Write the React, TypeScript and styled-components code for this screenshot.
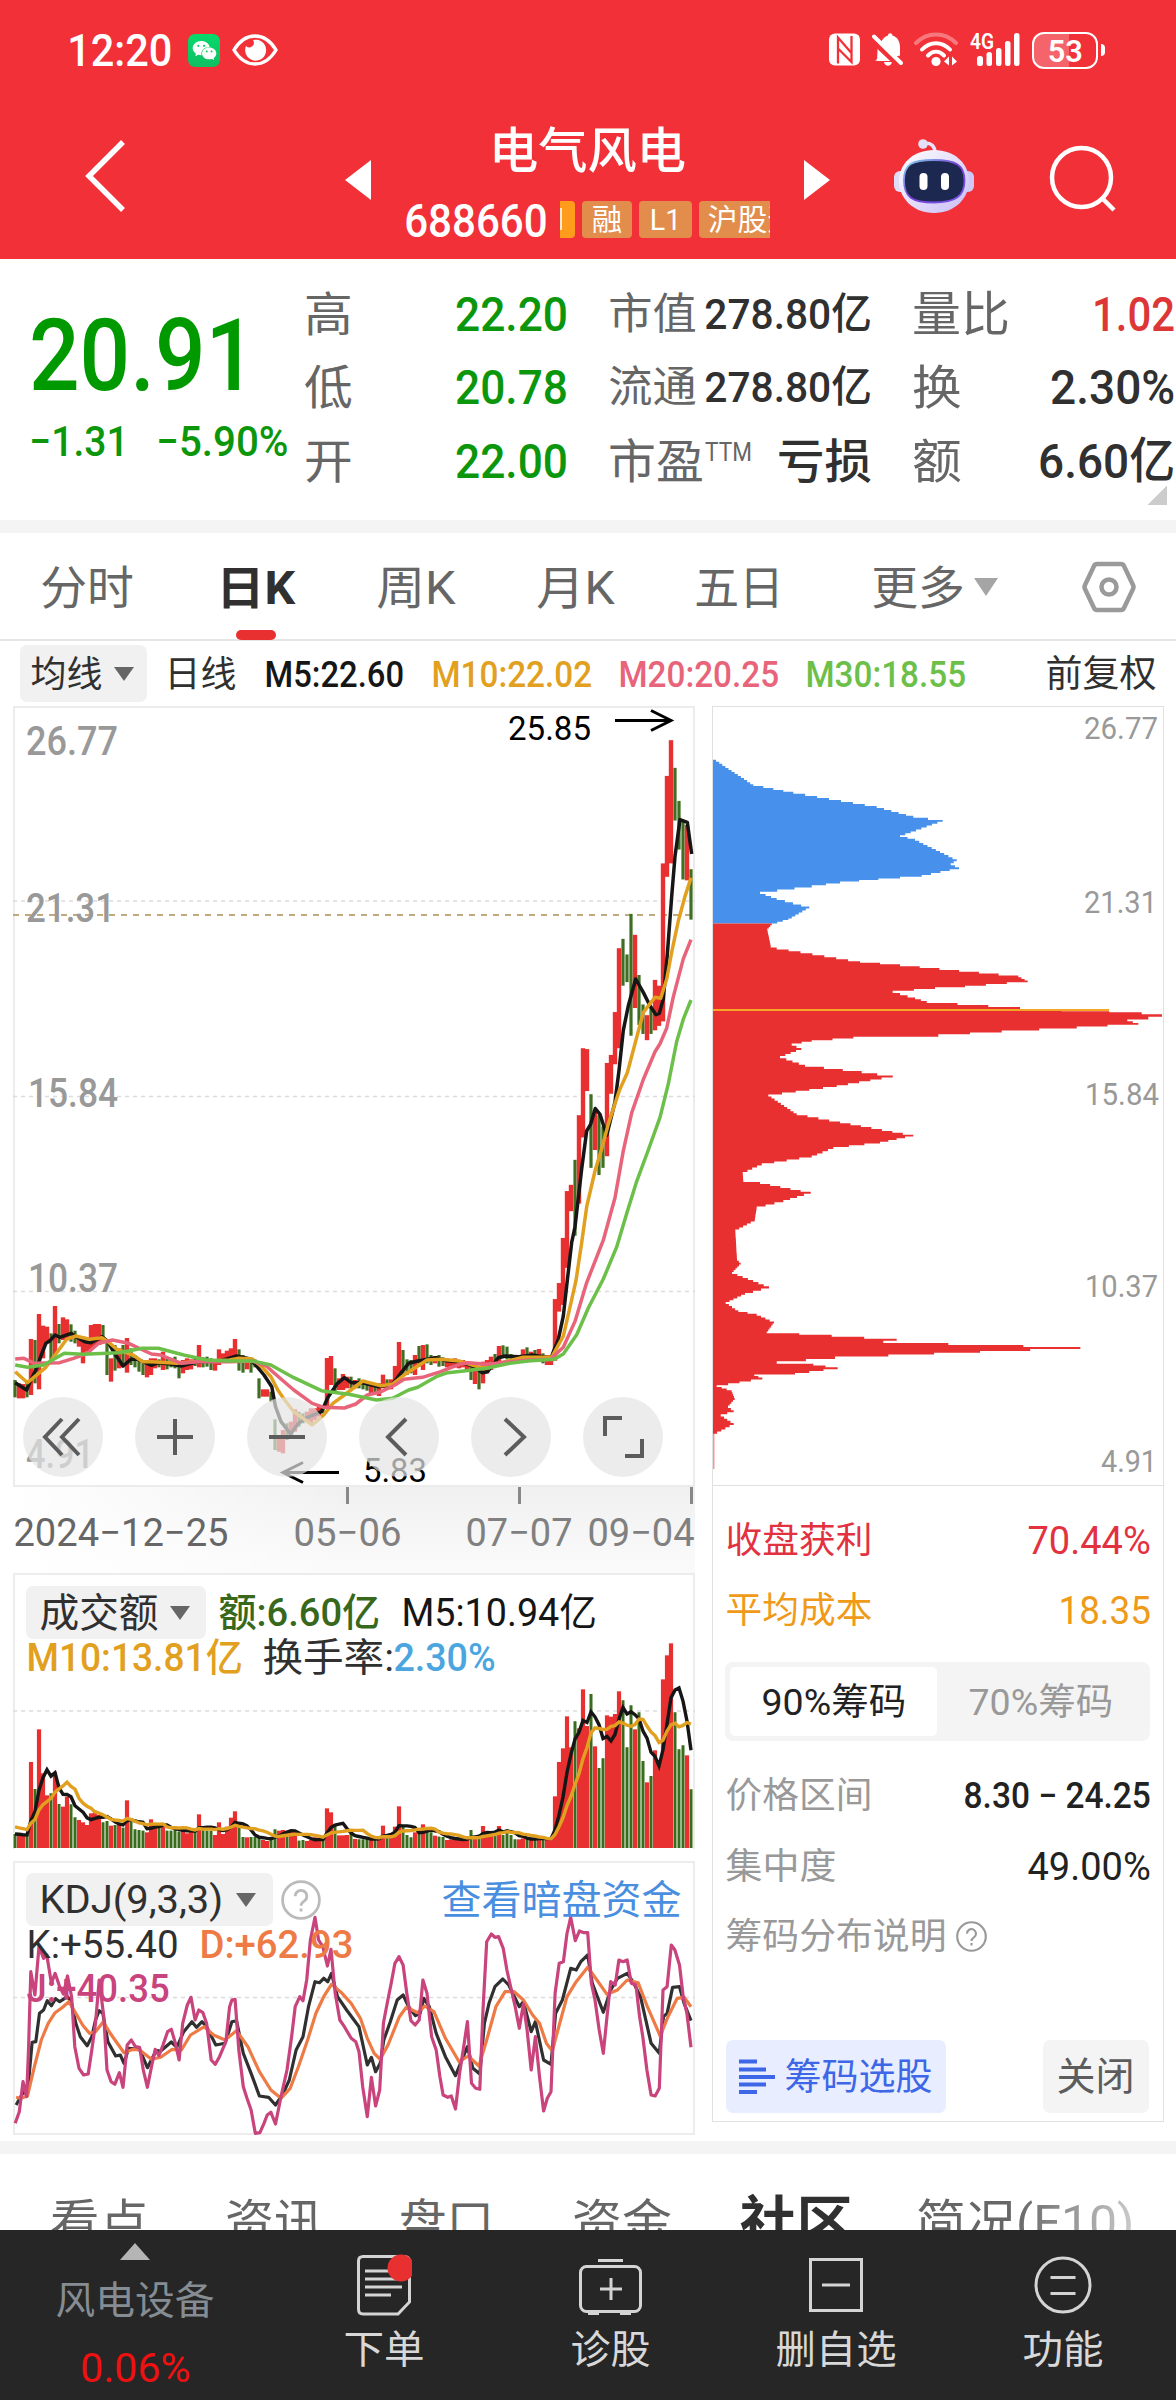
import React, { useLayoutEffect, useRef, useState } from "react";
import styled, { createGlobalStyle } from "styled-components";
import { AiFillWechat } from "react-icons/ai";

const RED = "#e83030";
const BRAND = "#f13037";
const INK = "#303030";
const GREY = "#666666";
const MUTED = "#999999";
const GREEN = "#0b960b";

const GlobalStyle = createGlobalStyle`
  html, body { margin: 0; padding: 0; background: #fff; }
  body {
    width: 1176px;
    height: 2400px;
    overflow: hidden;
    font-family: Roboto, "Noto Sans CJK SC", sans-serif;
    color: ${INK};
  }
  *, *::before, *::after { box-sizing: border-box; }
  svg { display: block; flex: none; }
`;

/* ---------- text that condenses to a given width ---------- */

const FitBox = styled.span<{ $w: number; $ml: number }>`
  display: block;
  flex: none;
  width: ${(p) => p.$w}px;
  margin-left: ${(p) => p.$ml}px;
`;

const FitInner = styled.span<{ $size: number; $color: string; $weight: number }>`
  display: block;
  width: max-content;
  white-space: nowrap;
  line-height: 1;
  font-size: ${(p) => p.$size}px;
  font-weight: ${(p) => p.$weight};
  color: ${(p) => p.$color};
  transform-origin: 0 50%;
`;

type FitProps = {
  w: number;
  size: number;
  ml?: number;
  color?: string;
  weight?: number;
  children: React.ReactNode;
};

function Fit({ w, size, ml = 0, color = INK, weight = 400, children }: FitProps) {
  const ref = useRef<HTMLSpanElement>(null);
  const [k, setK] = useState(1);
  const pad = size * 0.04;
  useLayoutEffect(() => {
    if (ref.current) setK((w + pad * 2) / ref.current.offsetWidth);
  }, [w, pad]);
  return (
    <FitBox $w={w} $ml={ml}>
      <FitInner
        ref={ref}
        $size={size}
        $color={color}
        $weight={weight}
        style={{ transform: `translate(${-pad}px, 1px) scaleX(${k})` }}
      >
        {children}
      </FitInner>
    </FitBox>
  );
}

const Row = styled.div<{ $h: number; $pl?: number; $mt?: number }>`
  display: flex;
  align-items: center;
  height: ${(p) => p.$h}px;
  padding-left: ${(p) => p.$pl ?? 0}px;
  margin-top: ${(p) => p.$mt ?? 0}px;
`;

const Space = styled.span<{ $w: number }>`
  flex: none;
  width: ${(p) => p.$w}px;
`;

const Strip = styled.div<{ $h: number }>`
  height: ${(p) => p.$h}px;
  background: #f4f4f4;
`;

/* ---------- header ---------- */

const Header = styled.header`
  height: 259px;
  background: ${BRAND};
`;

const StatusBar = styled.div`
  display: flex;
  align-items: center;
  height: 100px;
  padding: 0 72px 0 69px;
`;

const WechatTile = styled.span`
  display: flex;
  align-items: center;
  justify-content: center;
  width: 32px;
  height: 33px;
  margin-left: 17px;
  border-radius: 7px;
  background: linear-gradient(#06d96b, #10bf62);
  color: #fff;
`;

const Battery = styled.span`
  position: relative;
  display: flex;
  align-items: center;
  justify-content: center;
  width: 66px;
  height: 37px;
  margin-left: 12px;
  border: 2.5px solid #fff;
  border-radius: 12px;
  background: linear-gradient(90deg, #f4646a 57%, transparent 57%);
  &::after {
    content: "";
    position: absolute;
    right: -9px;
    top: 10px;
    width: 4px;
    height: 12px;
    border-radius: 0 4px 4px 0;
    background: #fff;
  }
`;

const NavBar = styled.nav`
  display: flex;
  height: 159px;
`;

const NavIcon = styled.div<{ $ml: number; $mt: number }>`
  flex: none;
  margin-left: ${(p) => p.$ml}px;
  margin-top: ${(p) => p.$mt}px;
`;

const TitleBlock = styled.div`
  flex: none;
  width: 366px;
  margin-left: 34px;
`;

const Badges = styled.div`
  display: flex;
  gap: 7px;
  width: 210px;
  height: 37px;
  margin: -2px 0 0 14px;
  overflow: hidden;
`;

const Badge = styled.span<{ $w: number }>`
  display: flex;
  flex: none;
  align-items: center;
  justify-content: center;
  width: ${(p) => p.$w}px;
  height: 37px;
  border-radius: 4px;
  background: #e38d4c;
`;

const CutBadge = styled(Badge)`
  justify-content: flex-start;
  border-radius: 0 4px 4px 0;
  background: #ff9c1c;
  &::before {
    content: "";
    width: 1.5px;
    height: 22px;
    background: rgba(255, 255, 255, 0.8);
  }
`;

const LastBadge = styled(Badge)`
  justify-content: flex-start;
  padding-left: 10px;
  border-radius: 4px 0 0 4px;
`;

/* ---------- quote ---------- */

const Quote = styled.section`
  display: flex;
  height: 261px;
  padding-left: 31px;
`;

const Price = styled.div`
  width: 275px;
`;

const Grid = styled.div`
  padding-top: 18px;
`;

const Cell = styled.div<{ $w: number; $ml?: number }>`
  display: flex;
  flex: none;
  align-items: center;
  justify-content: space-between;
  width: ${(p) => p.$w}px;
  margin-left: ${(p) => p.$ml ?? 0}px;
`;

const Superscript = styled.div`
  padding-bottom: 18px;
  margin: 0 auto 0 4px;
`;

const Corner = styled.div`
  width: 20px;
  height: 20px;
  margin: -12px 0 0 841px;
  background: linear-gradient(135deg, transparent 50%, #cccccc 50%);
`;

/* ---------- period tabs ---------- */

const PeriodTabs = styled.div`
  display: flex;
  align-items: center;
  height: 108px;
  padding: 2px 0 0 42px;
  border-bottom: 2px solid #e6e6e6;
`;

const ActiveTab = styled.div`
  position: relative;
  &::after {
    content: "";
    position: absolute;
    left: 18px;
    bottom: -30px;
    width: 40px;
    height: 10px;
    border-radius: 5px;
    background: ${RED};
  }
`;

const Chip = styled.div<{ $w: number; $h: number; $pl: number }>`
  display: flex;
  flex: none;
  align-items: center;
  width: ${(p) => p.$w}px;
  height: ${(p) => p.$h}px;
  padding-left: ${(p) => p.$pl}px;
  border-radius: 7px;
  background: #f1f1f1;
`;

const Down = styled.span<{ $ml: number; $s: number; $c?: string }>`
  flex: none;
  margin-left: ${(p) => p.$ml}px;
  border: ${(p) => p.$s / 2}px solid transparent;
  border-top: ${(p) => p.$s * 0.72}px solid ${(p) => p.$c ?? GREY};
  border-bottom: 0;
`;

/* ---------- body ---------- */

const Body = styled.main`
  display: flex;
  gap: 17px;
  height: 1435px;
  padding-left: 13px;
`;

const Left = styled.div`
  width: 682px;
`;

const PriceBox = styled.div`
  position: relative;
  height: 781px;
`;

const Tools = styled.div`
  position: absolute;
  left: 10px;
  top: 691px;
  display: flex;
  gap: 32px;
`;

const Tool = styled.button`
  display: flex;
  align-items: center;
  justify-content: center;
  width: 80px;
  height: 80px;
  padding: 0;
  border: 0;
  border-radius: 50%;
  background: rgba(228, 228, 228, 0.7);
`;

const Dates = styled.div`
  position: relative;
  height: 86px;
  background: linear-gradient(90deg, #fff 0, rgba(255, 255, 255, 0) 50%),
    linear-gradient(#f0f0f0, #fafafa 90%);
`;

const Ticks = styled.div`
  display: flex;
  gap: 169.5px;
  padding-left: 333px;
  & > i {
    width: 2.5px;
    height: 17px;
    background: #888;
  }
`;

const Panel = styled.div<{ $h: number; $mt?: number; $open?: boolean }>`
  position: relative;
  height: ${(p) => p.$h}px;
  margin-top: ${(p) => p.$mt ?? 0}px;
  border: 2px solid #ececec;
  ${(p) => (p.$open ? "border-bottom: 0;" : "")}
`;

const PanelChart = styled.svg`
  position: absolute;
  left: -2px;
  top: -2px;
  overflow: visible;
`;

const PanelHead = styled.div`
  position: relative;
`;

const Right = styled.div`
  width: 452px;
  height: 1416px;
  border: 1.5px solid #e0e0e0;
`;

const ChipInfo = styled.div`
  height: 634px;
  padding: 19px 14px 0 14px;
  border-top: 1.5px solid #e0e0e0;
`;

const InfoRow = styled.div<{ $h?: number }>`
  display: flex;
  align-items: center;
  justify-content: space-between;
  height: ${(p) => p.$h ?? 70}px;
`;

const Segmented = styled.div`
  display: flex;
  width: 425px;
  height: 79px;
  margin: 17px 0 18px -2px;
  padding: 5px;
  border-radius: 8px;
  background: #f4f4f4;
`;

const Segment = styled.div<{ $on?: boolean }>`
  display: flex;
  align-items: center;
  justify-content: center;
  width: 207px;
  height: 69px;
  border-radius: 5px;
  background: ${(p) => (p.$on ? "#fff" : "transparent")};
`;

const Actions = styled.div`
  display: flex;
  justify-content: space-between;
  margin: 69px 0 0 -1px;
`;

const Action = styled.div<{ $w: number; $bg: string; $pl: number }>`
  display: flex;
  align-items: center;
  width: ${(p) => p.$w}px;
  height: 73px;
  padding-left: ${(p) => p.$pl}px;
  border-radius: 7px;
  background: ${(p) => p.$bg};
`;

/* ---------- bottom ---------- */

const SectionTabs = styled.div`
  display: flex;
  align-items: center;
  height: 76px;
  padding: 59px 0 0 52px;
  overflow: hidden;
`;

const FadeTab = styled.div`
  mask-image: linear-gradient(90deg, #000 45%, rgba(0, 0, 0, 0.35));
`;

const BottomBar = styled.footer`
  display: flex;
  height: 170px;
  background: #262626;
`;

const BottomItem = styled.div<{ $w: number }>`
  display: flex;
  flex-direction: column;
  align-items: center;
  flex: none;
  width: ${(p) => p.$w}px;
  padding-top: 24px;
  gap: 14px;
`;

const Sector = styled.div`
  display: flex;
  flex-direction: column;
  align-items: center;
  width: 270px;
  padding-top: 13px;
`;

const Up = styled.span`
  border: 15px solid transparent;
  border-bottom: 17px solid #b5b5b5;
  border-top: 0;
  margin-bottom: 20px;
`;

/* ---------- chart data ---------- */

const BASE_X = 15;
const STEP = 4;
const xAt = (i: number) => BASE_X + i * STEP;

type Bar = [volume: number, hue: "r" | "g", high: number, low: number];

/* tops of the turnover columns, hue, then high and low of each candle */
const EARLY: Bar[] = [
  [822,"g",300,352],[827,"r",310,355],[827,"r",312,355],[825,"g",300,352],[606,"r",177,345],[687,"g",180,310],[508,"r",102,328],[640,"r",137,235],[706,"r",140,185],[700,"g",160,250],
  [636,"r",78,225],[732,"g",132,190],[740,"r",112,180],[710,"r",118,180],[733,"g",133,185],[772,"g",152,190],[780,"r",170,200],[787,"r",170,250],[795,"r",175,215],[760,"r",135,208],
  [752,"r",132,200],[765,"r",132,195],[787,"g",135,190],[783,"g",180,285],[797,"r",235,305],[795,"g",195,272],[795,"r",205,265],[803,"g",195,262],[721,"r",174,278],[785,"g",205,255],
  [808,"g",225,262],[810,"g",235,275],[812,"g",245,285],[817,"r",250,292],[778,"r",235,285],[790,"r",235,265],[800,"g",238,262],[795,"r",215,270],[812,"g",235,268],[812,"g",240,262],
  [808,"g",230,265],[815,"g",250,295],[808,"r",240,280],[820,"r",235,270],[812,"r",238,268],[814,"g",235,258],[763,"r",195,262],[808,"g",232,262],[812,"g",230,260],[812,"g",235,270],
  [825,"r",240,272],[787,"r",208,255],[822,"r",220,245],[800,"r",212,245],[773,"r",205,240],[754,"r",177,240],[800,"g",208,272],[831,"g",225,278],[832,"r",235,268],[831,"g",240,278],
  [831,"g",238,262],[831,"g",295,355],[840,"r",328,350],[843,"r",328,350],[836,"g",335,365],[808,"g",418,510],[812,"r",470,515],[810,"r",450,520],[815,"g",430,480],[815,"r",425,470],
  [812,"r",388,455],[842,"g",395,440],[840,"g",400,430],[843,"r",395,425],[840,"r",385,430],[832,"r",385,420],[838,"r",378,410],[840,"g",380,400],[745,"r",234,385],[757,"r",228,315],
  [795,"g",265,335],[826,"r",295,330],[826,"r",282,330],[825,"r",290,325],[822,"g",290,325],[837,"r",300,325],[838,"g",295,325],[838,"g",300,328],[836,"g",305,332],[838,"r",308,345],
  [835,"g",312,340],[836,"r",310,348],[797,"r",284,325],[825,"g",298,325],[825,"r",298,328],[800,"r",258,318],[739,"r",186,300],[800,"g",210,290],[825,"g",238,285],[832,"g",240,280],
  [817,"r",225,285],[817,"g",198,260],[793,"r",195,270],[808,"g",193,250],[817,"g",225,255],[827,"r",228,250],[830,"g",225,260],[831,"g",232,258],[840,"r",235,262],[838,"r",238,258],
  [838,"r",235,262],[838,"r",240,265],[838,"r",240,262],[838,"r",245,268],[810,"g",255,300],[830,"r",262,312],[828,"g",270,328],[798,"r",245,310],[820,"r",240,280],[815,"r",230,270],
  [820,"g",222,260],[798,"r",198,250],[825,"g",196,235],[808,"g",200,238],[825,"g",222,245],[838,"g",225,248],[838,"r",225,245],[835,"r",208,240],[836,"g",202,235],[838,"r",215,238],
  [838,"g",210,242],[830,"r",207,235],[835,"g",220,250],[838,"r",225,255],[838,"r",225,255],
];

const SURGE: Bar[] = [
  [709,"r",1342,1480],[606,"r",1306,1370],[565,"r",1205,1355],[469,"r",1100,1272],[562,"r",1086,1145],[484,"g",1030,1200],[505,"r",930,1128],[388,"r",780,980],[498,"r",782,876],[402,"g",883,1048],
  [559,"r",920,1008],[624,"g",930,1064],[595,"g",955,1048],[466,"r",813,1022],[470,"r",795,882],[462,"r",699,816],[394,"r",556,780],[421,"g",535,640],[562,"g",570,632],[436,"g",479,752],
  [508,"r",526,690],[457,"g",616,728],[603,"g",682,748],[667,"r",706,762],[648,"g",690,748],[571,"r",627,740],[600,"r",640,730],[358,"r",366,720],[286,"r",170,396],[250,"r",90,366],
  [457,"g",152,270],[568,"g",226,335],[556,"g",270,402],[586,"r",280,404],[688,"g",379,492],
];

type Candle = { x: number; hue: "r" | "g"; hi: number; lo: number; vol: number };

const CANDLES: Candle[] = [
  ...EARLY.map(([v, hue, h, l], i) => ({ x: xAt(i), hue, hi: 1280 + h / 3, lo: 1280 + l / 3, vol: (864 - v) / 3 })),
  ...SURGE.map(([v, hue, h, l], i) => ({
    x: xAt(i + EARLY.length),
    hue,
    hi: 700 + h / 2.24,
    lo: 700 + l / 2.24,
    vol: (864 - v) / 3,
  })),
];

const average = (n: number, seed: number) =>
  CANDLES.map((c, i) => {
    let sum = 0;
    for (let j = i - n + 1; j <= i; j++) sum += j < 0 ? seed : CANDLES[j].vol;
    return `${c.x},${(1848 - sum / n).toFixed(1)}`;
  }).join(" ");

const project = (src: string, ox: number, oy: number, kx: number, ky: number) =>
  src
    .trim()
    .split(/\s+/)
    .map((p) => {
      const [a, b] = p.split(",").map(Number);
      return `${(ox + a / kx).toFixed(1)},${(oy + b / ky).toFixed(1)}`;
    })
    .join(" ");

const avgLine = (flat: string, steep: string) =>
  project(flat, 0, 1280, 2.178, 3) + " " + project(steep, 520, 700, 3, 2.24);

const AVERAGES = [
  {
    color: "#161616",
    points: avgLine(
      "33,308 58,330 67,300 80,265 90,225 100,190 108,183 120,165 130,172 155,160 165,170 185,185 198,188 222,170 235,185 245,210 268,258 285,238 300,238 330,256 345,248 370,252 395,258 430,245 480,243 515,228 545,237 560,260 575,285 592,320 600,380 612,425 633,462 650,430 665,415 700,395 715,350 735,310 750,293 765,308 790,308 825,320 855,312 870,285 890,250 910,243 950,233 970,242 1000,245 1030,258 1050,278 1062,275 1085,233 1100,228 1130,230 1160,225 1200,235",
      "100,1460 115,1432 130,1380 142,1300 155,1215 165,1180 185,1050 200,965 212,950 226,915 240,928 260,975 285,900 297,830 310,740 325,685 347,625 370,655 390,685 408,705 418,702 430,670 442,570 455,440 465,350 480,268 502,274 515,345",
    ),
  },
  {
    color: "#e2a020",
    points: avgLine(
      "33,275 60,308 100,262 120,225 145,178 165,168 195,178 222,173 235,185 255,208 290,225 310,245 330,245 385,250 420,245 500,240 520,235 550,237 570,260 590,290 605,330 620,360 640,395 680,435 705,405 725,370 750,345 790,303 830,317 855,312 880,285 910,258 930,240 960,238 1000,243 1040,260 1065,263 1100,245 1140,232 1200,232",
      "98,1468 130,1425 150,1360 168,1300 185,1215 200,1135 225,1055 245,1005 265,950 298,875 322,835 345,770 370,700 390,680 405,666 422,668 440,625 455,565 475,495 495,440 513,398",
    ),
  },
  {
    color: "#e8647a",
    points: avgLine(
      "33,237 52,235 75,250 130,248 160,235 190,220 215,190 245,180 280,190 330,222 350,225 395,250 430,245 500,245 550,243 580,258 610,295 640,330 680,370 705,382 750,384 775,372 800,345 830,335 860,315 880,298 920,292 960,275 1000,253 1020,248 1060,253 1100,247 1150,240 1200,238",
      "98,1472 130,1450 165,1392 200,1305 250,1210 285,1115 310,1010 335,925 370,850 405,788 420,770 440,735 460,665 490,580 513,537",
    ),
  },
  {
    color: "#6cc04a",
    points: avgLine(
      "33,255 60,262 95,255 140,220 180,223 260,218 310,205 345,205 400,225 450,240 500,243 550,243 590,255 640,293 700,332 760,343 820,360 855,355 890,330 910,322 950,290 975,278 1010,273 1060,265 1110,250 1150,243 1205,238",
      "100,1478 130,1465 170,1422 205,1362 250,1297 290,1225 320,1150 350,1078 385,1008 420,935 445,860 470,765 490,715 513,672",
    ),
  },
];

const osc = (s: string) => project(s, 0, 1850, 2.178, 3);

const K_LINE = osc(
  "35,765 50,728 60,730 70,577 78,575 86,490 95,480 103,452 112,467 121,446 130,455 147,440 155,455 165,520 175,560 190,587 200,560 208,510 216,482 224,490 235,575 252,618 262,615 270,640 280,595 304,598 321,653 340,602 350,603 373,576 385,592 400,545 418,515 428,532 440,515 450,530 470,585 490,580 505,515 515,512 530,610 547,670 565,738 585,742 600,765 615,735 630,690 645,600 660,560 672,470 686,395 696,398 705,385 714,395 722,370 735,440 755,480 782,530 800,645 809,622 818,665 828,640 836,570 850,515 865,450 878,435 890,470 905,497 915,490 923,445 935,470 950,550 970,620 992,677 1018,590 1030,655 1045,672 1055,520 1065,460 1078,410 1095,387 1108,405 1131,470 1140,455 1157,545 1166,515 1184,630 1200,643 1210,490 1225,450 1243,355 1255,360 1265,335 1280,315 1290,400 1314,487 1330,420 1345,385 1366,370 1380,398 1395,440 1418,580 1436,610 1445,500 1453,490 1465,412 1480,410 1490,460 1505,512",
);
const D_LINE = osc(
  "35,742 45,745 60,738 75,650 90,570 105,520 120,488 135,473 150,455 165,490 180,525 195,550 208,545 225,515 240,550 270,608 290,598 304,600 330,628 350,622 375,598 395,600 415,555 445,530 465,555 490,570 515,542 540,590 565,665 590,720 612,745 632,715 650,650 670,570 688,490 705,440 722,403 745,430 765,460 785,505 800,565 815,610 828,628 845,585 870,500 885,472 910,488 925,468 945,485 970,565 1000,635 1020,618 1043,648 1060,570 1080,470 1100,425 1120,425 1140,450 1160,495 1175,520 1190,580 1203,603 1215,540 1235,440 1255,395 1280,352 1300,390 1322,433 1345,420 1366,390 1390,398 1410,470 1438,558 1455,500 1475,445 1490,442 1505,470",
);
const J_LINE = osc(
  "33,820 42,785 50,695 58,740 62,600 67,365 76,435 85,290 95,325 102,315 112,400 120,370 130,410 138,432 147,378 156,440 163,590 172,655 182,675 192,672 200,600 208,520 216,390 226,500 233,660 242,695 250,703 260,668 268,712 277,585 286,570 295,590 304,592 312,660 321,712 330,650 338,598 346,617 355,585 365,545 373,538 382,580 390,630 398,520 408,465 416,442 425,510 433,480 442,488 450,520 460,630 469,643 478,620 492,575 500,470 505,450 512,448 520,600 530,710 538,745 547,780 556,850 566,848 575,820 582,795 590,787 600,822 612,740 625,660 635,560 643,470 653,440 660,452 668,390 676,270 686,202 694,270 703,290 713,348 721,298 730,430 740,510 750,530 765,565 775,575 782,605 790,710 800,800 809,682 818,768 827,720 835,520 844,455 852,400 860,340 869,320 878,345 886,430 895,512 904,525 913,510 921,390 930,430 940,560 950,600 958,680 965,735 975,742 983,738 992,777 1001,670 1010,590 1018,515 1027,700 1036,715 1045,718 1052,480 1060,275 1070,252 1078,262 1086,260 1096,295 1104,360 1113,415 1122,470 1131,535 1140,462 1148,540 1157,660 1166,560 1175,680 1184,783 1192,745 1200,725 1209,430 1218,340 1227,335 1235,250 1243,202 1253,272 1262,243 1272,248 1280,248 1288,400 1296,450 1305,540 1314,610 1322,500 1330,395 1340,405 1348,330 1357,335 1366,330 1375,400 1385,405 1393,500 1400,560 1409,660 1418,735 1427,738 1436,715 1444,420 1453,410 1462,285 1470,300 1480,345 1488,440 1496,490 1505,592",
);

/* widens each cost-profile edge into 2px price steps */
const stepped = (src: string) => {
  const pts = src.split(" ").map((p) => p.split(",").map(Number));
  const out: string[] = [];
  for (let n = 0; n < pts.length - 1; n++) {
    const [x0, y0] = pts[n];
    const [x1, y1] = pts[n + 1];
    const count = Math.max(1, Math.round(Math.abs(y1 - y0) / 2));
    for (let s = 0; s < count; s++) {
      const x = x0 + ((x1 - x0) * s) / count;
      out.push(`${x.toFixed(1)},${(y0 + ((y1 - y0) * s) / count).toFixed(1)}`);
      out.push(`${x.toFixed(1)},${(y0 + ((y1 - y0) * (s + 1)) / count).toFixed(1)}`);
    }
  }
  out.push(pts[pts.length - 1].join(","));
  return out.join(" ");
};

const dist = (s: string) => project(s, 700, 701, 3, 1.96);
const LOSS =
  stepped(
    dist(
      "39,113 160,165 280,180 530,208 640,227 728,235 600,265 645,272 770,312 752,320 777,328 665,343 535,350 420,356 335,363 180,376 230,388 328,405 265,428 215,438",
    ),
  ) + " 713,924.5";
const GAIN =
  "713,924.5 " +
  stepped(
    dist(
      "215,438 202,448 212,480 230,485 480,512 600,518 955,540 983,550 795,560 705,563 578,570 645,583 680,590 865,598 960,602 1085,606 1228,610 1325,612 1388,616 1345,621 1282,626 1315,633 1130,640 905,648 715,655 460,660 335,667 275,673 304,682 240,698 315,715 485,727 578,736 410,755 205,773 290,810 420,826 640,852 540,866 400,876 335,893 185,908 128,925 130,941 180,945 332,964 250,980 170,993 164,1018 106,1038 111,1095 122,1103 96,1121 207,1149 135,1162 77,1180 115,1196 170,1203 222,1218 200,1238 395,1244 590,1252 550,1256 745,1260 970,1264 1141,1268 840,1276 565,1283 405,1287 230,1296 340,1301 413,1308 285,1319 163,1322 187,1328 50,1343 95,1353 104,1368 84,1383 101,1392 62,1400 101,1417 39,1438",
    ),
  );

type LabelProps = { x: number; y: number; w: number; size: number; color?: string; weight?: number; children: string };

/* y is the middle of the digits */
const Label = ({ x, y, w, size, color = MUTED, weight = 400, children }: LabelProps) => (
  <text
    x={x - 1}
    y={y + size * 0.355 + 1}
    fontSize={size}
    fontWeight={weight}
    fill={color}
    textLength={w + 2}
    lengthAdjust="spacingAndGlyphs"
  >
    {children}
  </text>
);

const Dash = ({ y, color = "#dcdcdc", on = 4 }: { y: number; color?: string; on?: number }) => (
  <line x1={13} x2={695} y1={y} y2={y} stroke={color} strokeWidth={on > 4 ? 2 : 1.5} strokeDasharray={`${on} ${on > 4 ? 6 : 4}`} />
);

const PriceChart = () => (
  <svg width={682} height={781} viewBox="13 706 682 781">
    <rect x={14} y={707} width={680} height={779} fill="none" stroke="#ececec" strokeWidth={2} />
    <Dash y={901} />
    <Dash y={1096.5} />
    <Dash y={1291.5} />
    <Dash y={915} color="#c0a97c" on={6} />
    {CANDLES.map((c) => (
      <rect
        key={c.x}
        x={c.hue === "r" ? c.x - 2.2 : c.x - 1.6}
        y={c.hi}
        width={c.hue === "r" ? 4.4 : 3.2}
        height={c.lo - c.hi}
        fill={c.hue === "r" ? RED : "#3f6f22"}
      />
    ))}
    {AVERAGES.map((a) => (
      <polyline key={a.color} points={a.points} fill="none" stroke={a.color} strokeWidth={3.5} strokeLinejoin="round" />
    ))}
    <Label x={27} y={740} w={90} size={40} weight={500}>26.77</Label>
    <Label x={27} y={907} w={87} size={40} weight={500}>21.31</Label>
    <Label x={29} y={1092} w={88} size={40} weight={500}>15.84</Label>
    <Label x={29} y={1277} w={88} size={40} weight={500}>10.37</Label>
    <Label x={27} y={1453} w={66} size={40} weight={500}>4.91</Label>
    <Label x={509} y={727} w={81} size={34} color="#000">25.85</Label>
    <Label x={364} y={1469} w={62} size={33} color="#000">5.83</Label>
    <path d="M615 720.5H670M651 710.5L671 720.5L651 730.5" fill="none" stroke="#000" strokeWidth={3} />
    <path d="M339 1472.5H284M303 1462.5L283 1472.5L303 1482.5" fill="none" stroke="#000" strokeWidth={3} />
  </svg>
);

const VolumeChart = () => (
  <PanelChart width={682} height={276} viewBox="13 1573 682 276">
    <Dash y={1711} />
    {CANDLES.map((c) => (
      <g key={c.x}>
        {c.hue === "g" && <rect x={c.x - 2} y={1848 - c.vol} width={4} height={c.vol} fill="#b3c9a5" />}
        <rect
          x={c.hue === "r" ? c.x - 2.1 : c.x - 1.2}
          y={1848 - c.vol}
          width={c.hue === "r" ? 4.2 : 2.4}
          height={c.vol}
          fill={c.hue === "r" ? RED : "#3a6c1e"}
        />
      </g>
    ))}
    <polyline points={average(5, 14)} fill="none" stroke="#161616" strokeWidth={3.4} />
    <polyline points={average(10, 22)} fill="none" stroke="#e2a020" strokeWidth={3.4} />
  </PanelChart>
);

const KdjChart = () => (
  <PanelChart width={682} height={274} viewBox="13 1861 682 274">
    <Dash y={1997.5} />
    <g fill="none" strokeWidth={3.2} strokeLinejoin="round">
      <polyline points={K_LINE} stroke="#303030" />
      <polyline points={D_LINE} stroke="#ee7a45" />
      <polyline points={J_LINE} stroke="#c9437d" />
    </g>
  </PanelChart>
);

const DistributionChart = () => (
  <svg width={449} height={778} viewBox="713 708 449 778">
    <polygon points={LOSS} fill="#4791ec" />
    <polygon points={GAIN} fill={RED} />
    <rect x={713} y={1430} width={1.5} height={40} fill={RED} opacity={0.5} />
    <line x1={713} x2={1109} y1={1011} y2={1011} stroke="#f5a623" strokeWidth={1.8} />
    <Label x={1085} y={728} w={72} size={31}>26.77</Label>
    <Label x={1085} y={902} w={71} size={31}>21.31</Label>
    <Label x={1086} y={1094} w={72} size={31}>15.84</Label>
    <Label x={1086} y={1286} w={71} size={31}>10.37</Label>
    <Label x={1102} y={1461} w={54} size={31}>4.91</Label>
  </svg>
);

/* ---------- icons ---------- */

const Stroke = ({ w, h, box, d, c = "#fff", sw = 5 }: { w: number; h: number; box: string; d: string; c?: string; sw?: number }) => (
  <svg width={w} height={h} viewBox={box} fill="none" stroke={c} strokeWidth={sw}>
    <path d={d} />
  </svg>
);

const Eye = () => (
  <svg width={46} height={32} viewBox="0 0 46 32">
    <path d="M2 16C8 6 15 2 23 2s15 4 21 14C38 26 31 30 23 30S8 26 2 16z" fill="none" stroke="#fff" strokeWidth={3.4} />
    <path d="M21 6a5 5 0 0 1-1 6.500a4.500 4.500 0 0 1-6-.5A10.500 10.500 0 1 0 21 6z" fill="#fff" />
  </svg>
);

const StatusIcons = () => (
  <svg width={192} height={36} viewBox="828 32 192 36" fill="#fff">
    <rect x={829} y={33.5} width={31} height={32} rx={6} />
    <path d="M838 63.500V37.500L851 52.500M838.500 49L851.500 62V36" fill="none" stroke={BRAND} strokeWidth={2.3} />
    <path d="M875 61c4-3 5-6 5-11c0-8 3-13 8-14.500c0-3 4-3 4.500 0c5 1.500 7.500 6 7.500 12v8zM884 62h8c-1 5-7 5-8 0z" />
    <path d="M877 61l23 0l-22-22z" />
    <path d="M871 39.500L899 66" stroke={BRAND} strokeWidth={5} />
    <path d="M874 36.500L901 63" stroke="#fff" strokeWidth={4} strokeLinecap="round" />
    <g fill="none" strokeWidth={4} strokeLinecap="round">
      <path d="M916 43C927 31.500 945 31.500 956 43" stroke="rgba(255,255,255,.35)" />
      <path d="M922 49.500C930 41 942 41 950 49.500M928 55.500C933 50.500 939 50.500 944 55.500" stroke="#fff" />
    </g>
    <circle cx={936} cy={61.5} r={4.6} />
    <path d="M944 61.500l5-5v9zM957 61.500l-5-5v9z" />
    <text x={970} y={49} fontSize={22} fontWeight={600} textLength={24} lengthAdjust="spacingAndGlyphs">4G</text>
    <rect x={977} y={56} width={6} height={10} rx={2.5} />
    <rect x={986.5} y={52} width={5.5} height={14} rx={2.5} />
    <rect x={996} y={48} width={5.5} height={18} rx={2.5} />
    <rect x={1005} y={41} width={5.5} height={25} rx={2.5} />
    <rect x={1014} y={33} width={5.5} height={33} rx={2.5} />
  </svg>
);

const Robot = () => (
  <svg width={82} height={76} viewBox="0 0 82 76">
    <defs>
      <linearGradient id="shell" x1="0" y1="0" x2="1" y2="1">
        <stop offset="0" stopColor="#ffffff" />
        <stop offset="1" stopColor="#c9bdf5" />
      </linearGradient>
      <linearGradient id="rim" x1="0" y1="0" x2="1" y2="1">
        <stop offset="0" stopColor="#7fd8e8" />
        <stop offset="0.5" stopColor="#7a3fd8" />
        <stop offset="1" stopColor="#7457e6" />
      </linearGradient>
    </defs>
    <path d="M30 5.500C38 4 42 8 42 15" fill="none" stroke="#e9e2fa" strokeWidth={3.5} />
    <circle cx={30} cy={6} r={4.8} fill="#e4e0f7" />
    <rect x={1} y={33} width={14} height={21} rx={6} fill="#dfdcf8" />
    <rect x={66} y={33} width={15} height={21} rx={6} fill="#cfc8f5" />
    <path d="M41 12C62 12 76 26 76 43S62 75 41 75S6 60 6 43S20 12 41 12z" fill="url(#shell)" />
    <path d="M41 22C63 22 71.500 27 71.500 42.500S63 64.500 41 64.500S11 59 11 42.500S19 22 41 22z" fill="#1d2850" stroke="url(#rim)" strokeWidth={1.8} />
    <rect x={26.5} y={35} width={8} height={17} rx={4} fill="#fff" />
    <rect x={48} y={35} width={8} height={17} rx={4} fill="#fff" />
  </svg>
);

const Help = ({ s, c = MUTED, ml }: { s: number; c?: string; ml: number }) => (
  <NavIcon $ml={ml} $mt={0}>
    <svg width={s} height={s} viewBox="0 0 38 38" fill="none" stroke={c} strokeWidth={2.6}>
      <circle cx={19} cy={19} r={17.5} />
      <path d="M13.500 15.500a5.500 5.500 0 1 1 8.500 4.500c-2 1.300-3 2.200-3 4.500M19 27v3" />
    </svg>
  </NavIcon>
);

const TOOL_ICONS = [
  "M16 -18L-1 0L16 18M-1 -18L-18 0L-1 18",
  "M-18 0H18M0 -18V18",
  "M-18 0H18",
  "M7 -18L-11 0L7 18",
  "M-6 -18L13 0L-6 18",
  "M-18 -1V-19H-1M19 2V19H2",
];

const metrics = [
  ["高", "22.20", "市值", "278.80亿", "量比", "1.02"],
  ["低", "20.78", "流通", "278.80亿", "换", "2.30%"],
  ["开", "22.00", "市盈", "亏损", "额", "6.60亿"],
];

export default function App() {
  return (
    <>
      <GlobalStyle />
      <Header>
        <StatusBar>
          <Fit w={102} size={44} color="#fff" weight={500}>12:20</Fit>
          <WechatTile><AiFillWechat size={27} /></WechatTile>
          <Space $w={12} />
          <Eye />
          <Space $w={550} />
          <StatusIcons />
          <Battery><Fit w={33} size={32} color="#fff" weight={600}>53</Fit></Battery>
        </StatusBar>
        <NavBar>
          <NavIcon $ml={84} $mt={38}><Stroke w={42} h={76} box="0 0 42 76" d="M39 4L5 38L39 72" sw={5.5} /></NavIcon>
          <NavIcon $ml={219} $mt={60}>
            <svg width={26} height={40}><path d="M26 0V40L0 20z" fill="#fff" /></svg>
          </NavIcon>
          <TitleBlock>
            <Row $h={100}><Fit w={193} size={49} ml={86} color="#fff" weight={500}>电气风电</Fit></Row>
            <Row $h={40}>
              <Fit w={140} size={46} ml={1} color="#fff" weight={500}>688660</Fit>
              <Badges>
                <CutBadge $w={15} />
                <Badge $w={50}><Fit w={28} size={30} color="#fff">融</Fit></Badge>
                <Badge $w={53}><Fit w={29} size={30} color="#fff">L1</Fit></Badge>
                <LastBadge $w={106}><Fit w={87} size={30} color="#fff">沪股通</Fit></LastBadge>
              </Badges>
            </Row>
          </TitleBlock>
          <NavIcon $ml={33} $mt={60}>
            <svg width={26} height={40}><path d="M0 0V40L26 20z" fill="#fff" /></svg>
          </NavIcon>
          <NavIcon $ml={63} $mt={38}><Robot /></NavIcon>
          <NavIcon $ml={74} $mt={44}>
            <svg width={70} height={70} viewBox="0 0 70 70" fill="none" stroke="#fff" strokeWidth={4.5}>
              <circle cx={32.5} cy={33.5} r={29.5} />
              <path d="M53 54L65 66" />
            </svg>
          </NavIcon>
        </NavBar>
      </Header>

      <Quote>
        <Price>
          <Row $h={100} $mt={46}><Fit w={219} size={100} ml={2} color="#009a00" weight={500}>20.91</Fit></Row>
          <Row $h={72}>
            <Fit w={96} size={42} color={GREEN} weight={500}>−1.31</Fit>
            <Fit w={129} size={42} ml={31} color={GREEN} weight={500}>−5.90%</Fit>
          </Row>
        </Price>
        <Grid>
          {metrics.map((m, i) => (
            <Row $h={73.3} key={m[0]}>
              <Cell $w={260}>
                <Fit w={45} size={47} color={GREY}>{m[0]}</Fit>
                <Fit w={109} size={49} color={GREEN} weight={500}>{m[1]}</Fit>
              </Cell>
              <Cell $w={260} $ml={44}>
                {i < 2 ? (
                  <>
                    <Fit w={85} size={43} color={GREY}>{m[2]}</Fit>
                    <Fit w={164} size={43} weight={500}>{m[3]}</Fit>
                  </>
                ) : (
                  <>
                    <Fit w={92} size={47} color={GREY}>{m[2]}</Fit>
                    <Superscript><Fit w={45} size={25} color={GREY}>TTM</Fit></Superscript>
                    <Fit w={91} size={47} weight={500}>{m[3]}</Fit>
                  </>
                )}
              </Cell>
              <Cell $w={259} $ml={44}>
                <Fit w={i === 0 ? 94 : 46} size={i === 0 ? 48 : 47} color={GREY}>{m[4]}</Fit>
                <Fit w={[79, 121, 133][i]} size={49} color={i === 0 ? "#dc3636" : INK} weight={500}>{m[5]}</Fit>
              </Cell>
            </Row>
          ))}
          <Corner />
        </Grid>
      </Quote>
      <Strip $h={13} />

      <PeriodTabs>
        <Fit w={90} size={46} color={GREY}>分时</Fit>
        <Space $w={86} />
        <ActiveTab><Fit w={75} size={46} weight={700}>日K</Fit></ActiveTab>
        <Fit w={76} size={46} ml={85} color={GREY}>周K</Fit>
        <Fit w={75} size={46} ml={84} color={GREY}>月K</Fit>
        <Fit w={86} size={46} ml={83} color={GREY}>五日</Fit>
        <Fit w={90} size={46} ml={91} color={GREY}>更多</Fit>
        <Down $ml={11} $s={25} $c="#a5a5a5" />
        <Space $w={84} />
        <svg width={54} height={52} viewBox="0 0 54 52" fill="none" stroke="#9a9a9a" strokeWidth={4.5} strokeLinejoin="round">
          <path d="M15 3H39Q41 3 42 5L51 24Q52 26 51 28L42 47Q41 49 39 49H15Q13 49 12 47L3 28Q2 26 3 24L12 5Q13 3 15 3z" />
          <circle cx={27} cy={26} r={7.5} />
        </svg>
      </PeriodTabs>

      <Row $h={65} $pl={20}>
        <Chip $w={127} $h={57} $pl={12}>
          <Fit w={69} size={36}>均线</Fit>
          <Down $ml={13} $s={20} />
        </Chip>
        <Fit w={69} size={36} ml={19}>日线</Fit>
        <Fit w={137} size={37} ml={31} color="#161616" weight={500}>M5:22.60</Fit>
        <Fit w={158} size={37} ml={30} color="#e2a020" weight={500}>M10:22.02</Fit>
        <Fit w={158} size={37} ml={29} color="#e8647a" weight={500}>M20:20.25</Fit>
        <Fit w={158} size={37} ml={29} color="#6cc04a" weight={500}>M30:18.55</Fit>
        <Fit w={108} size={37} ml={82}>前复权</Fit>
      </Row>

      <Body>
        <Left>
          <PriceBox>
            <PriceChart />
            <Tools>
              {TOOL_ICONS.map((d) => (
                <Tool key={d}>
                  <Stroke w={60} h={60} box="-30 -30 60 60" d={d} c="#5c5c5c" sw={4} />
                </Tool>
              ))}
            </Tools>
          </PriceBox>
          <Dates>
            <Ticks><i /><i /><i /></Ticks>
            <Row $h={56}>
              <Fit w={212} size={39} ml={2} color={GREY}>2024−12−25</Fit>
              <Fit w={105} size={39} ml={68} color="#808080">05−06</Fit>
              <Fit w={104} size={39} ml={67} color="#808080">07−07</Fit>
              <Fit w={104} size={39} ml={18} color="#808080">09−04</Fit>
            </Row>
          </Dates>

          <Panel $h={276} $open>
            <VolumeChart />
            <PanelHead>
              <Row $h={53} $pl={11} $mt={11}>
                <Chip $w={180} $h={53} $pl={15}>
                  <Fit w={116} size={40}>成交额</Fit>
                  <Down $ml={13} $s={20} />
                </Chip>
                <Fit w={159} size={39} ml={14} color="#37681c" weight={500}>额:6.60亿</Fit>
                <Fit w={192} size={39} ml={24} color="#161616">M5:10.94亿</Fit>
              </Row>
              <Row $h={36} $pl={13}>
                <Fit w={213} size={39} color="#e2a020" weight={500}>M10:13.81亿</Fit>
                <Fit w={128} size={39} ml={23}>换手率:</Fit>
                <Fit w={99} size={39} ml={3} color="#4ba6e0" weight={500}>2.30%</Fit>
              </Row>
            </PanelHead>
          </Panel>

          <Panel $h={274} $mt={12}>
            <KdjChart />
            <PanelHead>
              <Row $h={53} $pl={11} $mt={10}>
                <Chip $w={247} $h={53} $pl={15}>
                  <Fit w={181} size={39}>KDJ(9,3,3)</Fit>
                  <Down $ml={14} $s={20} />
                </Chip>
                <Help s={40} c="#bbbbbb" ml={8} />
                <Fit w={237} size={40} ml={122} color="#4a8fdf">查看暗盘资金</Fit>
              </Row>
              <Row $h={36} $pl={13}>
                <Fit w={149} size={38}>K:+55.40</Fit>
                <Fit w={151} size={38} ml={24} color="#ee7a45" weight={500}>D:+62.93</Fit>
              </Row>
              <Row $h={52} $pl={13}>
                <Fit w={140} size={38} color="#c9437d" weight={500}>J:+40.35</Fit>
              </Row>
            </PanelHead>
          </Panel>
        </Left>

        <Right>
          <DistributionChart />
          <ChipInfo>
            <InfoRow>
              <Fit w={144} size={36} color="#e2313f">收盘获利</Fit>
              <Fit w={120} size={38} color="#e2313f">70.44%</Fit>
            </InfoRow>
            <InfoRow>
              <Fit w={144} size={36} color="#ef9a18">平均成本</Fit>
              <Fit w={89} size={38} color="#ef9a18">18.35</Fit>
            </InfoRow>
            <Segmented>
              <Segment $on><Fit w={142} size={37} color="#222">90%筹码</Fit></Segment>
              <Segment><Fit w={142} size={37} color={MUTED}>70%筹码</Fit></Segment>
            </Segmented>
            <InfoRow $h={71}>
              <Fit w={144} size={36} color={MUTED}>价格区间</Fit>
              <Fit w={184} size={36} color="#222" weight={500}>8.30 − 24.25</Fit>
            </InfoRow>
            <InfoRow $h={71}>
              <Fit w={108} size={36} color={MUTED}>集中度</Fit>
              <Fit w={120} size={38} color="#222">49.00%</Fit>
            </InfoRow>
            <Row $h={70}>
              <Fit w={218} size={36} color={MUTED}>筹码分布说明</Fit>
              <Help s={31} ml={11} />
            </Row>
            <Actions>
              <Action $w={220} $bg="#e8eeff" $pl={13}>
                <Stroke w={36} h={36} box="0 0 36 36" d="M0 2.500H18M0 10.500H27M0 18H36M0 25.500H27M0 33H18" c="#3d67e6" sw={4} />
                <Fit w={145} size={37} ml={11} color="#3d67e6">筹码选股</Fit>
              </Action>
              <Action $w={106} $bg="#f4f4f4" $pl={15}>
                <Fit w={75} size={39} color="#5c5c5c">关闭</Fit>
              </Action>
            </Actions>
          </ChipInfo>
        </Right>
      </Body>
      <Strip $h={13} />

      <SectionTabs>
        <Fit w={95} size={48} color={GREY}>看点</Fit>
        <Fit w={94} size={48} ml={80} color={GREY}>资讯</Fit>
        <Fit w={91} size={48} ml={80} color={GREY}>盘口</Fit>
        <Fit w={96} size={48} ml={82} color={GREY}>资金</Fit>
        <Fit w={109} size={54} ml={72} weight={700}>社区</Fit>
        <Space $w={67} />
        <FadeTab><Fit w={215} size={48} color={GREY}>简况(F10)</Fit></FadeTab>
      </SectionTabs>

      <BottomBar>
        <Sector>
          <Up />
          <Row $h={40}><Fit w={156} size={39} color="#858c92">风电设备</Fit></Row>
          <Row $h={40} $mt={27}><Fit w={107} size={41} ml={1} color="#ee1111">0.06%</Fit></Row>
        </Sector>
        <BottomItem $w={228}>
          <svg width={56} height={62} viewBox="356 2254 56 62" fill="none" stroke="#d4d4d4" strokeWidth={3}>
            <path d="M362 2256.500H404Q409.500 2256.500 409.500 2262V2302L398 2314H363Q358.500 2314 358.500 2309V2261Q358.500 2256.500 363 2256.500zM365 2271H395M365 2279H402M365 2287H402M365 2295H391" />
            <circle cx={401} cy={2268} r={13.5} fill={RED} stroke="none" />
          </svg>
          <Fit w={78} size={39} color="#d8d8d8">下单</Fit>
        </BottomItem>
        <BottomItem $w={224}>
          <svg width={66} height={62} viewBox="576 2254 66 62" fill="none" stroke="#d4d4d4" strokeWidth={3}>
            <rect x={579.5} y={2266.5} width={60} height={45} rx={6} />
            <path d="M597 2260.500H622M610 2278V2300M599 2289H621M587 2313.500H598M619 2313.500H630" />
          </svg>
          <Fit w={77} size={39} color="#d8d8d8">诊股</Fit>
        </BottomItem>
        <BottomItem $w={228}>
          <svg width={56} height={62} viewBox="807 2254 56 62" fill="none" stroke="#d4d4d4" strokeWidth={3}>
            <rect x={809.5} y={2259.5} width={51} height={51} />
            <path d="M821 2285H849" />
          </svg>
          <Fit w={118} size={39} color="#d8d8d8">删自选</Fit>
        </BottomItem>
        <BottomItem $w={225}>
          <svg width={60} height={62} viewBox="1032.500 2254 60 62" fill="none" stroke="#d4d4d4" strokeWidth={3}>
            <circle cx={1062.5} cy={2285} r={27} />
            <path d="M1050 2277.500H1075M1050 2293.500H1075" />
          </svg>
          <Fit w={78} size={39} color="#d8d8d8">功能</Fit>
        </BottomItem>
      </BottomBar>
    </>
  );
}
